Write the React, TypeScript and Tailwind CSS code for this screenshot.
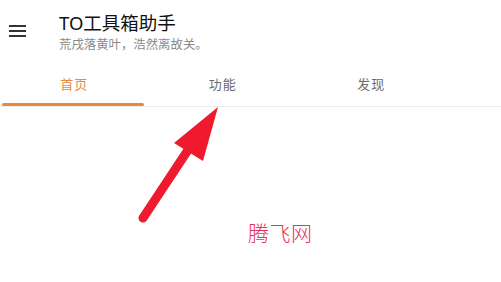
const tabs = ["首页", "功能", "发现"];

function MenuIcon() {
  return (
    <svg aria-hidden="true" width="18" height="14" viewBox="0 0 18 14">
      <path d="M0 2h17M0 7h17M0 12h17" stroke="#333" strokeWidth="1.8" />
    </svg>
  );
}

function PointerArrow() {
  return (
    <svg
      aria-hidden="true"
      className="pointer-events-none absolute left-0 top-0"
      width="501"
      height="282"
      viewBox="0 0 501 282"
    >
      <line
        x1="143"
        y1="218"
        x2="188"
        y2="150"
        stroke="#f01a2e"
        strokeWidth="9"
        strokeLinecap="round"
      />
      <polygon points="218,107 174,143 203,161" fill="#f01a2e" />
    </svg>
  );
}

export default function App() {
  return (
    <div
      className="relative h-[282px] w-[501px] overflow-hidden bg-white"
      style={{ fontFamily: '"Noto Sans", "Noto Sans CJK SC", sans-serif' }}
    >
      <header className="flex h-[60px] items-start pt-[12px]">
        <div className="flex w-[59px] justify-start pl-[9px] pt-[12px]">
          <MenuIcon />
        </div>
        <div className="flex flex-col">
          <span className="text-[18.5px] font-normal leading-[22px] text-[#111]">
            TO工具箱助手
          </span>
          <span className="mt-[3px] text-[12.4px] leading-[16px] text-[#8a8a8a]">
            荒戌落黄叶，浩然离故关。
          </span>
        </div>
      </header>

      <nav className="flex h-[47px] border-b border-[#ececec]">
        {tabs.map((tab, i) => {
          const active = i === 0;
          return (
            <div key={tab} className="flex w-[148.5px] flex-col items-center">
              <span
                className={
                  active
                    ? "mt-[15px] text-[13px] leading-[18px] tracking-[1px] text-[#e8893f]"
                    : "mt-[15px] text-[13px] leading-[18px] tracking-[1px] text-[#6b6b6b]"
                }
              >
                {tab}
              </span>
              {active ? (
                <div className="mt-auto ml-[-3px] h-[3.5px] w-[142px] rounded-full bg-[#e8893f]" />
              ) : null}
            </div>
          );
        })}
      </nav>

      <PointerArrow />

      <span
        className="absolute left-[248px] top-[219px] text-[21px] leading-[26px] tracking-[0.5px] text-[#e63358]"
        style={{ fontFamily: '"Noto Sans CJK SC", sans-serif', fontWeight: 300 }}
      >
        腾飞网
      </span>
    </div>
  );
}
